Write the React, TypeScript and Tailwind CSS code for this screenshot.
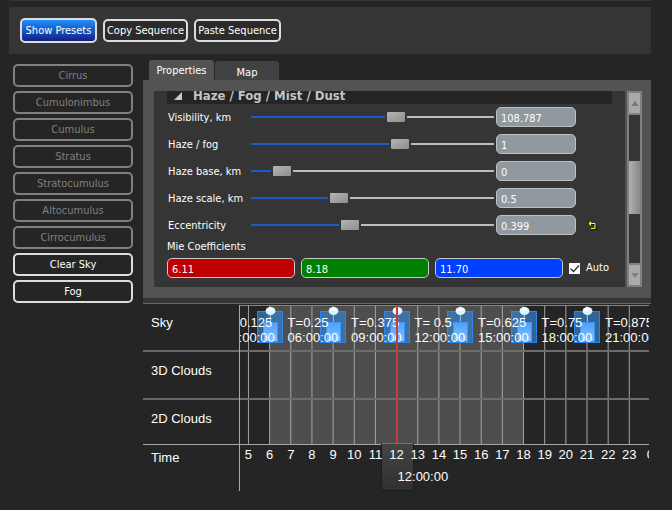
import { useState } from "react";

const clouds = ["Cirrus", "Cumulonimbus", "Cumulus", "Stratus", "Stratocumulus", "Altocumulus", "Cirrocumulus"];
const skies = ["Clear Sky", "Fog"];

const parameters = [
  { name: "Visibility, km", position: 0.604, value: "108.787" },
  { name: "Haze / fog", position: 0.622, value: "1" },
  { name: "Haze base, km", position: 0.098, value: "0" },
  { name: "Haze scale, km", position: 0.351, value: "0.5" },
  { name: "Eccentricity", position: 0.4, value: "0.399", changed: true },
];

const coefficients = [
  { name: "Red", value: "6.11", color: "bg-[#c00000]" },
  { name: "Green", value: "8.18", color: "bg-[#008000]" },
  { name: "Blue", value: "11.70", color: "bg-[#0040ff]" },
];

const keyframes = [
  { hour: 3, t: "T=0.125", time: "03:00:00" },
  { hour: 6, t: "T=0.25", time: "06:00:00" },
  { hour: 9, t: "T=0.375", time: "09:00:00" },
  { hour: 12, t: "T= 0.5", time: "12:00:00" },
  { hour: 15, t: "T=0.625", time: "15:00:00" },
  { hour: 18, t: "T=0.75", time: "18:00:00" },
  { hour: 21, t: "T=0.875", time: "21:00:00" },
];

const hours = Array.from({ length: 19 }, (_, i) => i + 5);

// The visible window of the day, in hours
const viewStart = 4.6;
const viewSpan = 19.33;
const at = (hour: number) => `${((hour - viewStart) / viewSpan) * 100}%`;

function ParameterRow({ name, position, value, changed }: (typeof parameters)[number]) {
  const [pos, setPos] = useState(position);
  const fill = `${pos * 100}%`;
  return (
    <div className="flex h-5 items-center">
      <label htmlFor={name} className="w-[84px] shrink-0 pt-[2px] pl-px whitespace-nowrap">
        {name}
      </label>
      <input
        id={name}
        type="range"
        min={0}
        max={1}
        step={0.001}
        value={pos}
        onChange={(e) => setPos(Number(e.target.value))}
        className="h-[10px] min-w-0 flex-1 appearance-none bg-[length:100%_2px] bg-center bg-no-repeat [&::-webkit-slider-thumb]:h-[10px] [&::-webkit-slider-thumb]:w-[18px] [&::-webkit-slider-thumb]:appearance-none [&::-webkit-slider-thumb]:rounded-[1px] [&::-webkit-slider-thumb]:bg-linear-to-br [&::-webkit-slider-thumb]:from-[#b4b4b4] [&::-webkit-slider-thumb]:to-[#8f8f8f] [&::-webkit-slider-thumb]:shadow-[-2px_0_#353535,2px_0_#353535]"
        style={{ backgroundImage: `linear-gradient(to right, #1b5cc4 ${fill}, #bcbcbc ${fill})` }}
      />
      <input
        type="text"
        aria-label={`${name} value`}
        defaultValue={value}
        className="ml-[2px] h-5 w-20 rounded-[5px] border border-[#c0c0c0] bg-[#9098a0] px-1 pt-[2px] text-white"
      />
      <div className="flex w-9 shrink-0 justify-center">
        {changed && (
          <button type="button" aria-label="Reset" className="pr-1">
            <svg width="9" height="9" viewBox="0 0 9 9" fill="none">
              <path d="M2 3.5h6v5H3" stroke="#111" />
              <path d="M1 2.5h6v5H3M2.5 0.5v4M1.5 1.5v2" stroke="#ffff40" />
            </svg>
          </button>
        )}
      </div>
    </div>
  );
}

function KeyframeIcon({ hour }: { hour: number }) {
  return (
    <svg
      width="27"
      height="40"
      viewBox="0 0 27 40"
      className="absolute top-0 -ml-[13px]"
      style={{ left: at(hour) }}
    >
      <defs>
        <linearGradient id={`key${hour}`} x1="0" y1="0" x2="0" y2="1">
          <stop offset="0" stopColor="#4da0fa" />
          <stop offset="1" stopColor="#86c2ff" />
        </linearGradient>
      </defs>
      <path d="M8.5 6.5a5 4.5 0 0 1 10 0Z" fill="#f0ffff" />
      <rect x="0.5" y="6.5" width="25" height="31" fill="#3580cc" fillOpacity="0.7" stroke="#2b86e8" />
      <path d="M8.5 6h10a5 4 0 0 1-10 0Z" fill="#d8f4ff" />
      <path d="M13.5 10v7" stroke="#8ab4dc" />
      <rect x="6.500" y="17.5" width="14" height="19" fill={`url(#key${hour})`} stroke="#3d94f2" />
    </svg>
  );
}

function Timeline() {
  return (
    <section className="flex border-t border-[#686868] font-[family-name:'Liberation_Sans',Arial,sans-serif] text-[13px] text-white">
      <div className="w-24 shrink-0">
        <div className="h-12 border-b-2 border-[#686868] px-2 pt-[11px] leading-4">Sky</div>
        <div className="h-12 border-b-2 border-[#686868] px-2 pt-[11px] leading-4">3D Clouds</div>
        <div className="h-[45px] border-b border-[#a8a8a8] px-2 pt-[11px] leading-4">2D Clouds</div>
        <div className="px-2 pt-[5px] leading-4">Time</div>
      </div>
      <div className="mt-px mr-[2px] min-w-0 flex-1 border-l border-[#a8a8a8]">
        <div className="relative h-[186px] overflow-hidden">
          <div
            className="absolute top-0 h-[139px] bg-[#4e4e4e]"
            style={{ left: at(6), width: `${(12 / viewSpan) * 100}%` }}
          />
          <svg className="absolute inset-x-0 top-0 h-[139px] w-full">
            {hours.map((h) => (
              <line key={h} x1={at(h)} x2={at(h)} y1="0" y2="139" stroke="#a4a4a4" />
            ))}
          </svg>
          <div className="absolute inset-x-0 top-0 h-px bg-[#93931c]" />
          <div className="absolute inset-x-0 top-[45px] h-[2px] bg-[#6c6c6c]" />
          <div className="absolute inset-x-0 top-[93px] h-[2px] bg-[#6c6c6c]" />
          <div className="absolute inset-x-0 top-[139px] h-px bg-[#a8a8a8]" />
          {keyframes.map((k) => (
            <KeyframeIcon key={k.hour} hour={k.hour} />
          ))}
          {keyframes.map((k) => (
            <div
              key={k.hour}
              className="absolute top-[10px] ml-[18px] leading-[15px] whitespace-nowrap"
              style={{ left: at(k.hour) }}
            >
              <div>{k.t}</div>
              <div>{k.time}</div>
            </div>
          ))}
          <div className="absolute top-0 -ml-px h-[139px] w-[2px] bg-[#c93c3c]" style={{ left: at(12) }} />
          <div
            className="absolute top-[138px] -ml-4 h-12 w-[33px] border border-[#1c1c1c] border-t-[#707070] bg-linear-to-b from-[#444444] to-[#303030] pt-[25px] pl-4 leading-4"
            style={{ left: at(12) }}
          >
            12:00:00
          </div>
          {[...hours, 24].map((h) => (
            <span
              key={h}
              className="absolute top-[142px] w-6 -translate-x-1/2 text-center leading-4"
              style={{ left: at(h) }}
            >
              {h === 24 ? "0" : h}
            </span>
          ))}
        </div>
      </div>
    </section>
  );
}

export default function App() {
  const button = "rounded-[5px] border-2 border-[#dcdcdc] bg-[#2b2b2b] pt-[2px] text-white";
  return (
    <div className="min-h-screen bg-[#252525] pr-[21px] pl-[9px] font-[family-name:'DejaVu_Sans_Condensed','DejaVu_Sans',sans-serif] text-[11px] text-white">
      <div className="h-px bg-[#353535]" />
      <header className="mt-[6px] flex h-[47px] items-center gap-[6px] bg-[#353535] pl-[11px]">
        <button
          type="button"
          className="h-[25px] w-[77px] rounded-[5px] border-2 border-[#dcdcdc] bg-linear-to-b from-[#2090ff] to-[#141c84] pt-[2px] whitespace-nowrap"
        >
          Show Presets
        </button>
        <button type="button" className={`${button} h-[23px] w-[85px] whitespace-nowrap`}>
          Copy Sequence
        </button>
        <button type="button" className={`${button} h-[23px] w-[87px] whitespace-nowrap`}>
          Paste Sequence
        </button>
      </header>

      <div className="mt-[6px] flex">
        <nav className="ml-1 flex w-[120px] shrink-0 flex-col gap-1 pt-1">
          {clouds.map((c) => (
            <button
              key={c}
              type="button"
              disabled
              className="h-[23px] rounded-[5px] border-2 border-[#808080] pt-[2px] text-[#808080]"
            >
              {c}
            </button>
          ))}
          {skies.map((s) => (
            <button key={s} type="button" className="h-[23px] rounded-[5px] border-2 border-[#dcdcdc] pt-[2px]">
              {s}
            </button>
          ))}
        </nav>

        <main className="ml-[10px] min-w-0 flex-1">
          <div role="tablist" className="flex items-end pl-[6px]">
            <button
              type="button"
              role="tab"
              aria-selected
              className="h-5 w-[65px] rounded-t-[3px] bg-[#535353] pt-[2px]"
            >
              Properties
            </button>
            <button type="button" role="tab" className="ml-px h-[19px] w-16 rounded-t-[3px] bg-[#424242] pt-1">
              Map
            </button>
          </div>

          <div className="bg-[#353535] pb-[5px]">
            <div className="flex border-11 border-[#535353] border-r-[9px] bg-[#353535]">
              <div className="h-[196px] min-w-0 flex-1 overflow-hidden px-[13px]">
                <h2 className="flex h-[13px] items-center gap-[11px] bg-[#252525] pl-[7px] text-[13px] leading-[13px] font-bold text-[#c4c4c4]">
                  <svg width="8" height="8" viewBox="0 0 8 8" className="-mt-1 shrink-0">
                    <path d="M8 0v8H0Z" fill="#c8c8c8" />
                  </svg>
                  <span className="-mt-1">Haze / Fog / Mist / Dust</span>
                </h2>
                <div className="mt-[3px] flex flex-col gap-[7px]">
                  {parameters.map((p) => (
                    <ParameterRow key={p.name} {...p} />
                  ))}
                </div>
                <div className="mt-1 leading-4">Mie Coefficients</div>
                <div className="mt-[3px] flex items-center gap-[6px]">
                  {coefficients.map((c) => (
                    <input
                      key={c.name}
                      type="text"
                      aria-label={c.name}
                      defaultValue={c.value}
                      className={`h-5 min-w-0 flex-1 rounded-[5px] border border-[#c8c8c8] px-1 pt-[2px] text-white ${c.color}`}
                    />
                  ))}
                  <label className="flex w-[43px] shrink-0 items-center gap-[6px]">
                    <span className="relative flex size-[11px] shrink-0">
                      <input type="checkbox" defaultChecked className="peer size-[11px] appearance-none bg-white" />
                      <svg
                        viewBox="0 0 11 11"
                        className="pointer-events-none absolute inset-0 hidden size-[11px] peer-checked:block"
                      >
                        <path d="M1.5 5.5 4.5 8.5 10 2.5" fill="none" stroke="#303030" strokeWidth="1.3" />
                      </svg>
                    </span>
                    Auto
                  </label>
                </div>
              </div>
              <div className="flex w-[17px] shrink-0 flex-col bg-[#535353] pl-[2px]">
                <div className="flex h-[196px] flex-col border-2 border-[#808080] bg-[#353535]">
                  <button
                    type="button"
                    aria-label="Scroll up"
                    className="flex h-[22px] items-center justify-center border-b-2 border-[#808080] bg-[#aaaaaa]"
                  >
                    <svg width="8" height="5" viewBox="0 0 8 5">
                      <path d="M4 0 8 5H0Z" fill="#807878" />
                    </svg>
                  </button>
                  <div className="flex-1 pt-[46px]">
                    <div className="h-[53px] bg-linear-to-r from-[#b0b0b0] to-[#888888]" />
                  </div>
                  <button
                    type="button"
                    aria-label="Scroll down"
                    className="flex h-[22px] items-center justify-center border-t-2 border-[#808080] bg-[#aaaaaa]"
                  >
                    <svg width="8" height="5" viewBox="0 0 8 5">
                      <path d="M0 0h8L4 5Z" fill="#808080" />
                    </svg>
                  </button>
                </div>
              </div>
            </div>
          </div>
          <Timeline />
        </main>
      </div>
    </div>
  );
}
